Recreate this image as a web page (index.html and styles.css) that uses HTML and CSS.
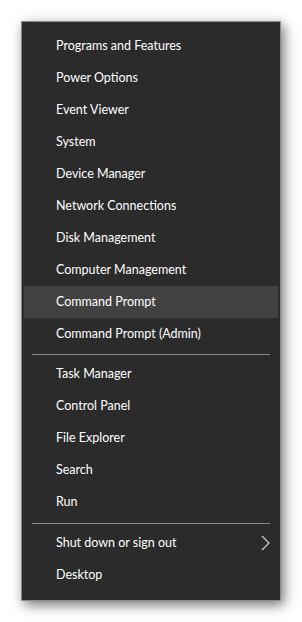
FILE: index.html
```html
<!DOCTYPE html>
<html lang="en">
<head>
    <meta charset="UTF-8">
    <title>Quick Link Menu</title>
    <link rel="stylesheet" href="styles.css">
</head>
<body>
    <div class="menu">
        <div class="item">Programs and Features</div>
        <div class="item">Power Options</div>
        <div class="item">Event Viewer</div>
        <div class="item">System</div>
        <div class="item">Device Manager</div>
        <div class="item">Network Connections</div>
        <div class="item">Disk Management</div>
        <div class="item">Computer Management</div>
        <div class="item hover">Command Prompt</div>
        <div class="item">Command Prompt (Admin)</div>
        <div class="sep"></div>
        <div class="item">Task Manager</div>
        <div class="item">Control Panel</div>
        <div class="item">File Explorer</div>
        <div class="item">Search</div>
        <div class="item">Run</div>
        <div class="sep sep-low"></div>
        <div class="item sub">
            <span>Shut down or sign out</span>
            <svg class="chevron" width="9" height="16" viewBox="0 0 9 16">
                <path d="M1 1 L8 8 L1 15" fill="none" stroke="#d8d8d8" stroke-width="1.1"/>
            </svg>
        </div>
        <div class="item">Desktop</div>
    </div>
</body>
</html>
```
FILE: styles.css
```css
body {
    margin: 0;
    padding: 21px;
    background-color: #fff;
}
.menu {
    box-sizing: border-box;
    width: 260px;
    padding: 8px 0 9px;
    background-color: #2b2b2b;
    border: 1px solid #8c8c8c;
    box-shadow: 3px 4px 12px rgba(0, 0, 0, 0.55);
    font-family: Lato, "Noto Sans", sans-serif;
    font-size: 12.5px;
    color: #fff;
}
.item {
    display: flex;
    align-items: center;
    justify-content: space-between;
    box-sizing: border-box;
    height: 32px;
    margin: 0 2px;
    padding: 0 8px 2px 32px;
}
.item.hover {
    background-color: #414141;
}
.sep {
    height: 1px;
    margin: 4px 10px 3px;
    background-color: #8a8a8a;
}
.sep.sep-low {
    margin-top: 5px;
}
.chevron {
    display: block;
    margin-top: 2px;
}
```
